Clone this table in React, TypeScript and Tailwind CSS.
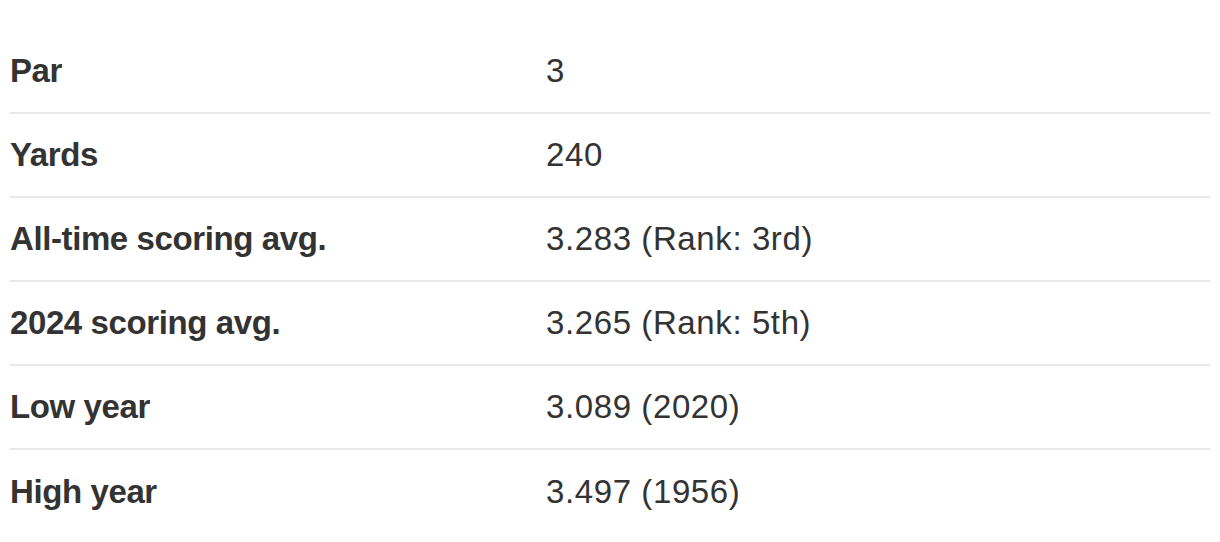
import React from 'react';

const ROWS = [
  { label: 'Par', value: '3' },
  { label: 'Yards', value: '240' },
  { label: 'All-time scoring avg.', value: '3.283 (Rank: 3rd)' },
  { label: '2024 scoring avg.', value: '3.265 (Rank: 5th)' },
  { label: 'Low year', value: '3.089 (2020)' },
  { label: 'High year', value: '3.497 (1956)' },
];

const App: React.FC = () => {
  return (
    <div className="w-[1220px] h-[542px] bg-white px-[10px] pt-[30px] font-['Liberation_Sans',Arial,sans-serif] text-[#333333]">
      {ROWS.map((row, i) => (
        <div
          key={row.label}
          className={`flex items-center h-[84px] pb-[2px] ${i < ROWS.length - 1 ? 'border-b-2 border-[#e8e8e8]' : ''}`}
        >
          <div className="w-[536px] shrink-0 text-[33px] font-bold tracking-[-0.4px] leading-none">
            {row.label}
          </div>
          <div className="text-[33px] tracking-[0.6px] leading-none">{row.value}</div>
        </div>
      ))}
    </div>
  );
};

export default App;
